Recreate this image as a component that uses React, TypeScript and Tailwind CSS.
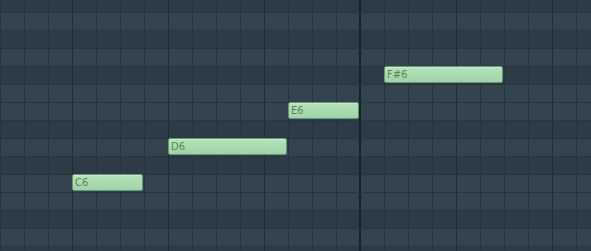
import React from "react";

const ROW = 18;
const COL = 24;

// pitch rows from top (starting at y = -6): true = black key (dark row)
const rows = [
  true, // A#6
  false, // A6
  true, // G#6
  false, // G6
  true, // F#6
  false, // F6
  false, // E6
  true, // D#6
  false, // D6
  true, // C#6
  false, // C6
  false, // B5
  true, // A#5
  false, // A5
  true, // G#5
];

const notes = [
  { label: "C6", row: 10, start: 3, len: 3 },
  { label: "D6", row: 8, start: 7, len: 5 },
  { label: "E6", row: 6, start: 12, len: 3 },
  { label: "F#6", row: 4, start: 16, len: 5 },
];

function Cell({ col }: { col: number }) {
  const cls =
    col === 15
      ? "border-l-2 -ml-px w-[25px] border-[#152029]"
      : col % 4 === 3
        ? "border-l w-[24px] border-[#1f2b35]"
        : "border-l w-[24px] border-[#27343f]";
  return <div className={`h-full shrink-0 ${cls}`} />;
}

export default function App() {
  const cols = Array.from({ length: 25 }, (_, i) => i);
  return (
    <div className="relative w-[591px] h-[251px] overflow-hidden bg-[#2d3c47]">
      <div className="flex flex-col -mt-[6px]">
        {rows.map((dark, i) => (
          <div
            key={i}
            className={`flex h-[18px] shrink-0 border-t border-[#27343f] ${
              dark ? "bg-[#2c3b46]" : "bg-[#34444f]"
            }`}
          >
            {cols.map((c) => (
              <Cell key={c} col={c} />
            ))}
          </div>
        ))}
      </div>

      {notes.map((n) => (
        <div
          key={n.label}
          className="absolute flex items-center h-[17px] rounded-[2px] border border-[#6a9272] bg-[linear-gradient(#b4e3bc,#9fd3a8)] pl-[2px] shadow-[inset_0_1px_0_#c6eecc]"
          style={{
            left: n.start * COL,
            top: -6 + n.row * ROW,
            width: n.len * COL - 1,
          }}
        >
          <span className="text-[10px] leading-none text-[#66854f] font-['DejaVu_Sans',sans-serif]">
            {n.label}
          </span>
        </div>
      ))}
    </div>
  );
}
